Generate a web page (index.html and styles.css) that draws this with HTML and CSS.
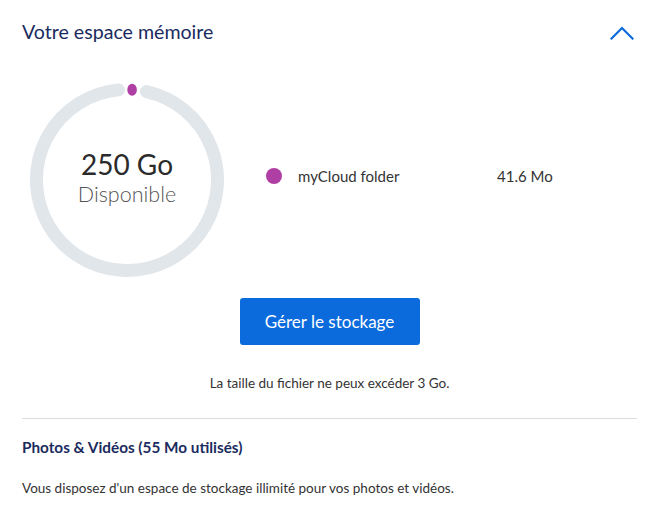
FILE: index.html
```html
<!DOCTYPE html>
<html lang="fr">
<head>
<meta charset="utf-8">
<title>Votre espace mémoire</title>
<link rel="stylesheet" href="styles.css">
</head>
<body>
<section class="panel">
  <header class="panel-head">
    <h2 class="title">Votre espace mémoire</h2>
    <svg class="chevron" width="24" height="14" viewBox="0 0 24 14" aria-hidden="true">
      <path d="M1.5 12.5 L12 2 L22.5 12.5" fill="none" stroke="#0b6bdc" stroke-width="2.2" stroke-linecap="square"/>
    </svg>
  </header>

  <div class="storage">
    <div class="chart">
      <svg class="ring" width="200" height="200" viewBox="0 0 200 200" aria-hidden="true">
        <path d="M119.43 11.61 A90.5 90.5 0 1 1 91.48 9.90" fill="none" stroke="#e1e6eb" stroke-width="13" stroke-linecap="round"/>
        <ellipse cx="105.1" cy="9.8" rx="4.8" ry="6" fill="#b03fa5"/>
      </svg>
      <div class="chart-label">
        <div class="amount">250 Go</div>
        <div class="avail">Disponible</div>
      </div>
    </div>
    <ul class="legend">
      <li class="legend-item">
        <span class="dot"></span>
        <span class="name">myCloud folder</span>
        <span class="size">41.6 Mo</span>
      </li>
    </ul>
  </div>

  <div class="actions">
    <button class="btn">Gérer le stockage</button>
    <p class="note">La taille du fichier ne peux excéder 3 Go.</p>
  </div>

  <div class="media">
    <h3 class="media-title">Photos &amp; Vidéos (55 Mo utilisés)</h3>
    <p class="media-text">Vous disposez d'un espace de stockage illimité pour vos photos et vidéos.</p>
  </div>
</section>
</body>
</html>
```

FILE: styles.css
```css
* { box-sizing: border-box; }

body {
  margin: 0;
  background: #fff;
  font-family: Lato, "Open Sans", sans-serif;
  color: #333;
}

.panel {
  padding: 0 10px 0 22px;
}

.panel-head {
  display: flex;
  justify-content: space-between;
  align-items: center;
  height: 62px;
}

.title {
  margin: 0;
  font-size: 19.6px;
  font-weight: 400;
  color: #1a2b5e;
}

.chevron {
  margin-right: 3px;
  margin-top: 3px;
}

.storage {
  display: flex;
  align-items: center;
  margin-top: 18px;
  padding-left: 5px;
}

.chart {
  display: grid;
  width: 200px;
  height: 200px;
}

.ring, .chart-label {
  grid-area: 1 / 1;
}

.chart-label {
  display: flex;
  flex-direction: column;
  align-items: center;
  justify-content: center;
  padding-bottom: 6px;
}

.amount {
  font-size: 28px;
  color: #2b2b2b;
  line-height: 34px;
}

.avail {
  font-size: 21.5px;
  font-weight: 300;
  color: #555;
  line-height: 26px;
}

.legend {
  list-style: none;
  margin: 0 0 8px 39px;
  padding: 0;
}

.legend-item {
  display: flex;
  align-items: center;
  font-size: 15px;
  color: #333;
}

.dot {
  width: 16px;
  height: 16px;
  border-radius: 50%;
  background: #b03fa5;
  margin-right: 16px;
}

.name {
  width: 199px;
}

.actions {
  display: flex;
  flex-direction: column;
  align-items: center;
  margin-top: 18px;
}

.btn {
  width: 180px;
  height: 47px;
  border: 0;
  border-radius: 3px;
  background: #0b6bdc;
  color: #fff;
  font-family: inherit;
  font-size: 17px;
}

.note {
  margin: 30px 0 0;
  font-size: 13.5px;
  color: #333;
}

.media {
  margin-top: 27px;
  border-top: 1px solid #dcdcdc;
}

.media-title {
  margin: 19px 0 0;
  font-size: 15.3px;
  font-weight: 700;
  color: #1a2b5e;
}

.media-text {
  margin: 24px 0 0;
  font-size: 13.5px;
  color: #333;
}
```
